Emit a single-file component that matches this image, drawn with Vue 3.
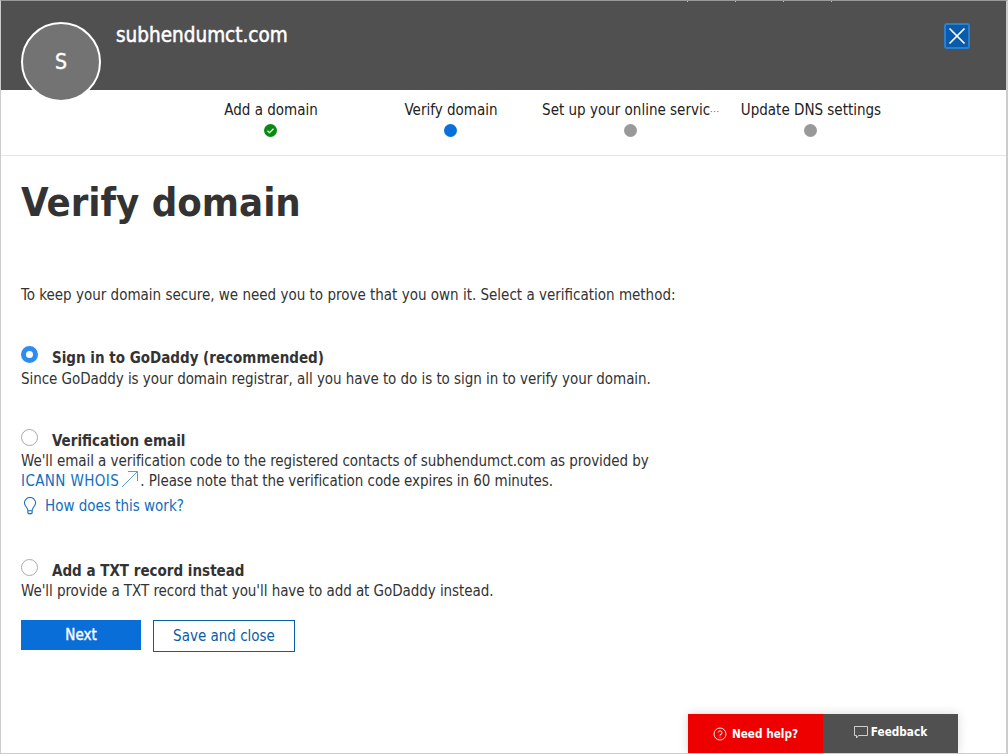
<script setup>
const steps = [
  { label: 'Add a domain', state: 'done' },
  { label: 'Verify domain', state: 'active' },
  { label: 'Set up your online servic', more: true, state: 'todo' },
  { label: 'Update DNS settings', state: 'todo' }
]
</script>

<template>
  <div class="page">
    <div class="ticks"></div>
    <header class="head">
      <div class="avatar">S</div>
      <div class="domain">subhendumct.com</div>
      <button class="close" aria-label="Close">
        <svg width="18" height="18" viewBox="0 0 18 18"><path d="M1.5 1.5L16.500 16.500M16.500 1.500L1.500 16.500" stroke="#fff" stroke-width="1.700" fill="none"/></svg>
      </button>
    </header>
    <nav class="steps">
      <div v-for="s in steps" :key="s.label" class="step">
        <div class="step-label">{{ s.label }}<span v-if="s.more" class="more">···</span></div>
        <div class="dot" :class="s.state">
          <svg v-if="s.state === 'done'" width="13" height="13" viewBox="0 0 13 13"><path d="M3.500 6.800L5.500 8.600L9.500 4.800" stroke="#fff" stroke-width="1.200" fill="none"/></svg>
        </div>
      </div>
    </nav>
    <main class="body">
      <h1>Verify domain</h1>
      <p class="intro">To keep your domain secure, we need you to prove that you own it. Select a verification method:</p>

      <section class="opt first">
        <div class="opt-title"><span class="radio on"></span><b>Sign in to GoDaddy (recommended)</b></div>
        <div class="line">Since GoDaddy is your domain registrar, all you have to do is to sign in to verify your domain.</div>
      </section>

      <section class="opt second">
        <div class="opt-title"><span class="radio"></span><b>Verification email</b></div>
        <div class="line">We'll email a verification code to the registered contacts of subhendumct.com as provided by</div>
        <div class="line whois-line"><a class="whois">ICANN WHOIS</a>
          <svg class="ext" width="18" height="18" viewBox="0 0 18 18"><path d="M1 17L16.500 1.500M7 1.500H16.500V11" stroke="#5b9bd0" stroke-width="1" fill="none"/></svg>. Please note that the verification code expires in 60 minutes.</div>
        <div class="how">
          <svg class="bulb" width="14" height="19" viewBox="0 0 16 22"><path d="M5.500 15.500C5.500 12.500 1.500 10.500 1.500 6.800A6.500 6.300 0 0 1 14.500 6.800C14.500 10.500 10.500 12.500 10.500 15.500V18.500Q8 20.500 5.500 18.500ZM5.500 16H10.500" stroke="#106ebe" stroke-width="1.200" fill="none"/></svg>
          <a>How does this work?</a>
        </div>
      </section>

      <section class="opt third">
        <div class="opt-title"><span class="radio"></span><b>Add a TXT record instead</b></div>
        <div class="line">We'll provide a TXT record that you'll have to add at GoDaddy instead.</div>
      </section>

      <div class="actions">
        <button class="btn primary">Next</button>
        <button class="btn outline">Save and close</button>
      </div>
    </main>

    <div class="floating">
      <div class="help">
        <svg width="14" height="14" viewBox="0 0 14 14"><circle cx="7" cy="7" r="6" stroke="#fff" stroke-width="0.900" fill="none"/><path d="M5.200 5.500A1.900 1.900 0 1 1 7 7.700V8.600M7 9.800V10.800" stroke="#fff" stroke-width="0.900" fill="none"/></svg>
        <span>Need help?</span>
      </div>
      <div class="feedback">
        <svg width="14" height="14" viewBox="0 0 14 14"><path d="M0.500 1.500H13.500V10.500H4.500L2.500 13V10.500H0.500Z" stroke="#ddd" stroke-width="0.900" fill="none"/></svg>
        <span>Feedback</span>
      </div>
    </div>
  </div>
</template>

<style>
html, body { margin: 0; background: #fff; }
</style>

<style scoped>
.page {
  position: relative;
  box-sizing: border-box;
  width: 1008px;
  height: 754px;
  overflow: hidden;
  background: #fff;
  border-top: 1px solid #999;
  border-left: 1px solid #ccc;
  border-right: 2px solid #ccc;
  border-bottom: 1px solid #ccc;
  font-family: "DejaVu Sans Condensed", "DejaVu Sans", sans-serif;
  font-size: 15px;
  color: #333;
}
.ticks {
  position: absolute;
  left: 686px;
  top: 0;
  width: 146px;
  height: 1px;
  z-index: 3;
  background: repeating-linear-gradient(90deg, #bbb 0 1px, transparent 1px 48px);
}
.head {
  position: relative;
  height: 89px;
  background: #505050;
  color: #fff;
}
.avatar {
  position: absolute;
  left: 20px;
  top: 21px;
  box-sizing: border-box;
  width: 80px;
  height: 80px;
  border-radius: 50%;
  border: 2px solid #fff;
  background: #737373;
  display: flex;
  align-items: center;
  justify-content: center;
  font-size: 21px;
  -webkit-text-stroke: 0.400px #fff;
  z-index: 2;
}
.domain {
  padding: 21px 0 0 115px;
  font-size: 20.500px;
  line-height: 27px;
  font-weight: 400;
  -webkit-text-stroke: 0.500px #fff;
}
.close {
  position: absolute;
  right: 36px;
  top: 22px;
  box-sizing: border-box;
  width: 26px;
  height: 26px;
  padding: 0;
  border: 2px solid #2a7fd0;
  border-radius: 3px;
  background: #0a5cab;
  display: flex;
  align-items: center;
  justify-content: center;
}
.steps {
  height: 66px;
  box-sizing: border-box;
  border-bottom: 1px solid #e6e6e6;
  display: flex;
  padding-left: 179px;
}
.step {
  width: 180px;
  display: flex;
  flex-direction: column;
  align-items: center;
}
.step-label {
  width: 180px;
  margin-top: 10px;
  padding-left: 2px;
  box-sizing: border-box;
  height: 20px;
  line-height: 20px;
  text-align: center;
  white-space: nowrap;
  color: #222;
}
.more { font-size: 9px; letter-spacing: 0.700px; color: #555; }
.dot {
  margin-top: 4px;
  width: 13px;
  height: 13px;
  border-radius: 50%;
  background: #999;
  display: flex;
}
.dot.done { background: #0b8a12; }
.dot.active { background: #0a6fd8; }
.body { padding: 0 20px; }
h1 {
  margin: 0;
  padding-top: 21px;
  font-size: 39.700px;
  line-height: 50px;
  font-weight: 700;
  color: #333;
}
.intro { margin: 0; padding-top: 58px; line-height: 20px; }
.opt-title {
  display: flex;
  align-items: center;
  height: 20px;
}
.opt-title b { font-weight: 700; }
.first .opt-title { height: 19px; margin-bottom: 2px; }
.third .opt-title { height: 17px; margin-bottom: 2px; }
.radio {
  box-sizing: border-box;
  width: 17px;
  height: 17px;
  margin: -7px 14px 0 0;
  border-radius: 50%;
  border: 1px solid #aaa;
  background: #fff;
}
.radio.on { border: 5px solid #2d8cf0; }
.line { line-height: 20px; white-space: nowrap; letter-spacing: -0.055px; }
.whois-line { margin-top: -1px; }
.first { margin-top: 43px; }
.second { margin-top: 42px; }
.third { margin-top: 43px; }
a { color: #106ebe; }
.whois { letter-spacing: 0.400px; }
.ext { vertical-align: -2px; margin: 0 1px 0 2px; }
.how {
  display: flex;
  align-items: center;
  gap: 8px;
  height: 26px;
  margin-top: 2px;
}
.bulb { margin-left: 2px; }
.actions { display: flex; gap: 12px; margin-top: 19px; }
.btn {
  box-sizing: border-box;
  padding: 0;
  font: inherit;
  border-radius: 0;
}
.primary { width: 120px; height: 30px; border: 0; background: #0a6ed9; color: #fff; -webkit-text-stroke: 0.400px #fff; }
.outline { width: 142px; height: 32px; border: 1px solid #0a5ca8; background: #fff; color: #0a5ca8; }
.floating {
  position: absolute;
  left: 687px;
  bottom: 0;
  display: flex;
  height: 39px;
  box-shadow: 0 0 10px rgba(0,0,0,.15);
  color: #fff;
  font-size: 11.700px;
  font-weight: 700;
}
.help, .feedback {
  width: 135px;
  display: flex;
  align-items: center;
  justify-content: center;
  gap: 5px;
}
.help { background: #ee0000; }
.feedback { background: #505050; padding-bottom: 3px; box-sizing: border-box; gap: 3px; }
</style>
